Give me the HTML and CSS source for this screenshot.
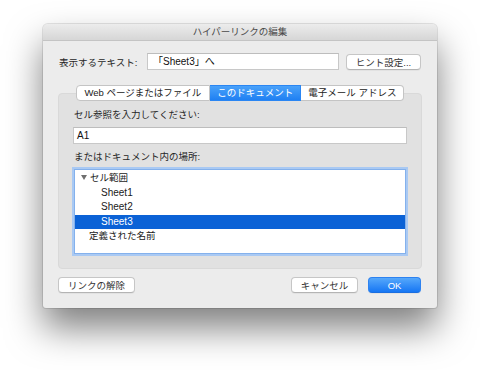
FILE: index.html
```html
<!DOCTYPE html>
<html lang="ja">
<head>
    <meta charset="UTF-8">
    <title>ハイパーリンクの編集</title>
    <link rel="stylesheet" href="styles.css">
</head>
<body>

    <div class="window">
        <div class="titlebar">ハイパーリンクの編集</div>

        <div class="content">
            <div class="display-row">
                <span class="display-label">表示するテキスト:</span>
                <div class="field display-field">「Sheet3」へ</div>
                <button class="btn hint-btn">ヒント設定...</button>
            </div>

            <div class="tab-panel">
                <div class="tabs">
                    <div class="tab">Web ページまたはファイル</div>
                    <div class="tab active">このドキュメント</div>
                    <div class="tab">電子メール アドレス</div>
                </div>

                <div class="panel-body">
                    <div class="label">セル参照を入力してください:</div>
                    <div class="field ref-field">A1</div>
                    <div class="label second">またはドキュメント内の場所:</div>
                    <div class="tree">
                        <div class="tree-row group"><span class="arrow"></span>セル範囲</div>
                        <div class="tree-row sheet">Sheet1</div>
                        <div class="tree-row sheet">Sheet2</div>
                        <div class="tree-row sheet selected">Sheet3</div>
                        <div class="tree-row names">定義された名前</div>
                    </div>
                </div>
            </div>

            <div class="footer">
                <button class="btn unlink-btn">リンクの解除</button>
                <div class="spacer"></div>
                <button class="btn cancel-btn">キャンセル</button>
                <button class="btn ok-btn">OK</button>
            </div>
        </div>
    </div>

</body>
</html>
```

FILE: styles.css
```css
html {
    background: white;
}
body {
    margin: 0;
    box-sizing: border-box;
    min-height: 370px;
    padding: 24px 0 0 43px;
    background: white;
    font-family: "Liberation Sans", "Noto Sans CJK JP", sans-serif;
    font-size: 9.5px;
    color: #262626;
}
.window {
    width: 394px;
    height: 284px;
    background: #ececec;
    border-radius: 5px 5px 3px 3px;
    box-shadow: 0 20px 36px rgba(0, 0, 0, 0.5), 0 0 0 1px rgba(0, 0, 0, 0.1);
    overflow: hidden;
}
.titlebar {
    height: 16px;
    line-height: 16px;
    text-align: center;
    color: #4a4a4a;
    background: linear-gradient(to bottom, #ececec, #d6d6d6);
    border-bottom: 1px solid #c4c4c4;
}
.content {
    padding: 12px 15px 0 15px;
}
.display-row {
    display: flex;
    align-items: center;
    height: 17px;
    padding: 0 1px;
}
.display-label {
    width: 88px;
}
.field {
    box-sizing: border-box;
    height: 17px;
    line-height: 15px;
    background: white;
    border: 1px solid #c8c8c8;
    border-top-color: #bdbdbd;
    padding: 0 5px;
    color: #111;
    font-size: 10px;
}
.display-field {
    width: 192px;
}
.btn {
    box-sizing: border-box;
    height: 16px;
    padding: 0;
    font-family: inherit;
    font-size: 9.5px;
    color: #333;
    background: white;
    border: 1px solid #c6c6c6;
    border-bottom-color: #b4b4b4;
    border-radius: 4px;
    box-shadow: 0 1px 0 rgba(0, 0, 0, 0.04);
}
.hint-btn {
    width: 75px;
    margin-left: 7px;
}
.tab-panel {
    margin-top: 23px;
    background: #e1e1e1;
    border: 1px solid #d9d9d9;
    border-radius: 4px;
}
.tabs {
    display: flex;
    justify-content: center;
    margin-top: -9px;
}
.tab {
    box-sizing: border-box;
    height: 16px;
    line-height: 14px;
    padding: 0 7px;
    background: white;
    border: 1px solid #c4c4c4;
    border-left: none;
    color: #222;
}
.tab:first-child {
    border-left: 1px solid #c4c4c4;
    border-radius: 4px 0 0 4px;
    padding: 0 8px;
}
.tab:last-child {
    border-radius: 0 4px 4px 0;
}
.tab.active {
    color: white;
    background: linear-gradient(to bottom, #4aa2fa, #1f80f3);
    border-color: #2a86f3;
}
.panel-body {
    padding: 0 14px 14px 14px;
}
.label {
    height: 12px;
    line-height: 12px;
    margin-top: 8px;
    padding-left: 1px;
}
.label.second {
    margin-top: 7px;
}
.ref-field {
    margin-top: 6px;
    padding-left: 3px;
}
.tree {
    box-sizing: border-box;
    height: 85px;
    margin: 6px 1px 0 1px;
    padding-top: 1px;
    background: white;
    border: 1px solid #84b1ec;
    box-shadow: 0 0 0 2px #a9c9f3;
}
.tree-row {
    height: 14.5px;
    line-height: 14.5px;
    color: #1a1a1a;
}
.tree-row.group {
    padding-left: 6px;
    display: flex;
    align-items: center;
}
.arrow {
    width: 0;
    height: 0;
    margin: 0 3px 1px 0;
    border-left: 3px solid transparent;
    border-right: 3px solid transparent;
    border-top: 5px solid #6f6f6f;
}
.tree-row.sheet {
    padding-left: 26px;
    font-size: 10px;
}
.tree-row.selected {
    background: #0b62d6;
    color: white;
}
.tree-row.names {
    padding-left: 14px;
}
.footer {
    display: flex;
    align-items: center;
    margin-top: 8px;
    padding-right: 1px;
}
.spacer {
    flex: 1;
}
.unlink-btn {
    width: 77px;
}
.cancel-btn {
    width: 67px;
}
.ok-btn {
    width: 53px;
    margin-left: 10px;
    color: white;
    background: linear-gradient(to bottom, #56a8fb, #1676f4);
    border-color: #2d82f0;
    border-bottom-color: #1a6ee0;
}
```
